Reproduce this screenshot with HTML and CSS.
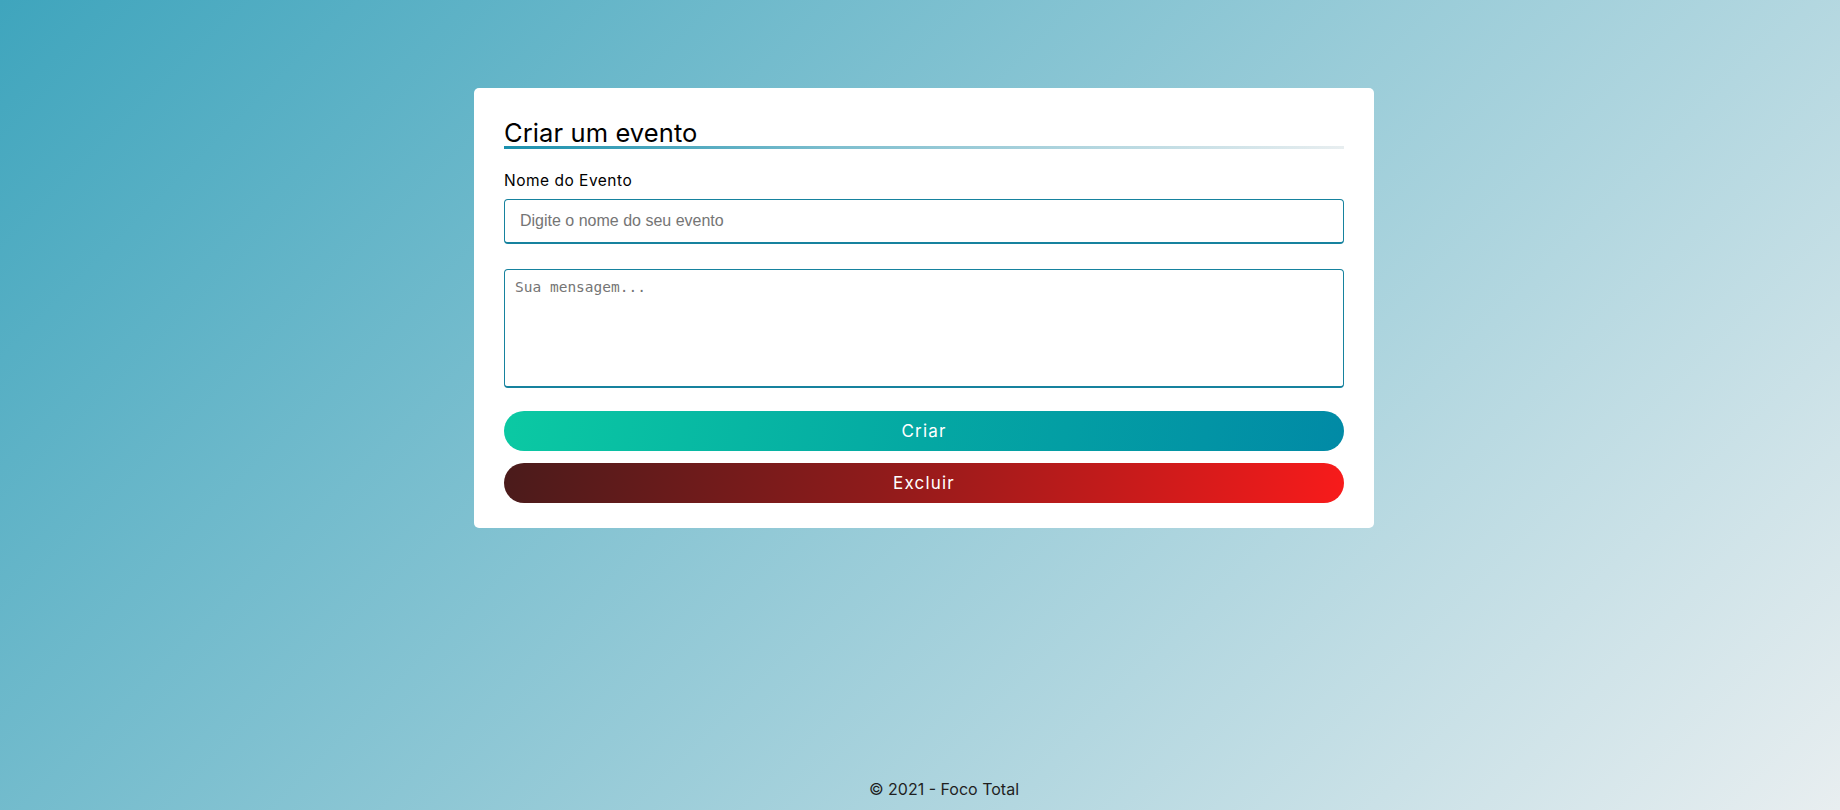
FILE: index.html
```html
<!DOCTYPE html>
<html lang="pt-BR">
<head>
<meta charset="utf-8">
<title>Criar um evento</title>
<link rel="stylesheet" href="styles.css">
</head>
<body>
<div class="page">
  <main class="main">
    <form class="card">
      <h1 class="title">Criar um evento</h1>
      <div class="title-bar"></div>
      <label class="label" for="nome">Nome do Evento</label>
      <input class="input" id="nome" type="text" placeholder="Digite o nome do seu evento">
      <textarea class="textarea" placeholder="Sua mensagem..."></textarea>
      <button type="button" class="btn btn-create">Criar</button>
      <button type="button" class="btn btn-delete">Excluir</button>
    </form>
  </main>
  <footer class="footer">© 2021 - Foco Total</footer>
</div>
</body>
</html>
```
FILE: styles.css
```css
* { box-sizing: border-box; }
html, body { margin: 0; padding: 0; }
body {
  min-height: 810px;
  background: linear-gradient(135deg, #3fa5bd 0%, #e8eef0 100%);
  font-family: Inter, "Liberation Sans", sans-serif;
  color: #000;
}
.page {
  min-height: 810px;
  display: flex;
  flex-direction: column;
}
.main {
  flex: 1;
  display: flex;
  justify-content: center;
  padding-top: 88px;
  padding-left: 8px;
}
.card {
  width: 900px;
  height: 440px;
  background: #fff;
  border-radius: 5px;
  padding: 32px 30px 25px;
  display: flex;
  flex-direction: column;
}
.title {
  margin: 0;
  font-family: Inter, "Liberation Sans", sans-serif;
  font-weight: 400;
  font-size: 25.5px;
  line-height: 26px;
  letter-spacing: 0.1px;
}
.title-bar {
  height: 3px;
  margin-top: 0;
  background: linear-gradient(90deg, #1a90ad 0%, #7fbfcf 40%, #e8eef0 100%);
}
.label {
  margin-top: 23px;
  font-family: Inter, "Liberation Sans", sans-serif;
  font-size: 15.5px;
  line-height: 18px;
  font-weight: 400;
  letter-spacing: 0.5px;
}
.input {
  margin-top: 9px;
  height: 45px;
  border: 1px solid #16829e;
  border-bottom-width: 2px;
  border-radius: 4px;
  padding: 0 15px;
  font-family: "Liberation Sans", Arial, sans-serif;
  font-size: 16px;
  outline: none;
}
.input::placeholder { color: #757575; }
.textarea {
  margin-top: 25px;
  height: 119px;
  border: 1px solid #16829e;
  border-bottom-width: 2px;
  border-radius: 4px;
  padding: 9px 10px;
  font-family: "DejaVu Sans Mono", monospace;
  font-size: 14.5px;
  resize: none;
  outline: none;
}
.textarea::placeholder { color: #757575; }
.btn {
  height: 40px;
  border: none;
  border-radius: 20px;
  color: #fff;
  font-family: Inter, "Liberation Sans", sans-serif;
  font-size: 17px;
  letter-spacing: 1.2px;
  cursor: pointer;
}
.btn-create {
  margin-top: 23px;
  background: linear-gradient(100deg, #0bc9a3 0%, #04a8a3 50%, #018aa6 100%);
}
.btn-delete {
  margin-top: 12px;
  background: linear-gradient(100deg, #4a1b1b 0%, #901b1b 45%, #f81b1b 100%);
}
.footer {
  text-align: center;
  font-family: Inter, "Liberation Sans", sans-serif;
  font-size: 16px;
  color: #1f1f1f;
  padding-left: 48px;
  padding-bottom: 11px;
}
```
